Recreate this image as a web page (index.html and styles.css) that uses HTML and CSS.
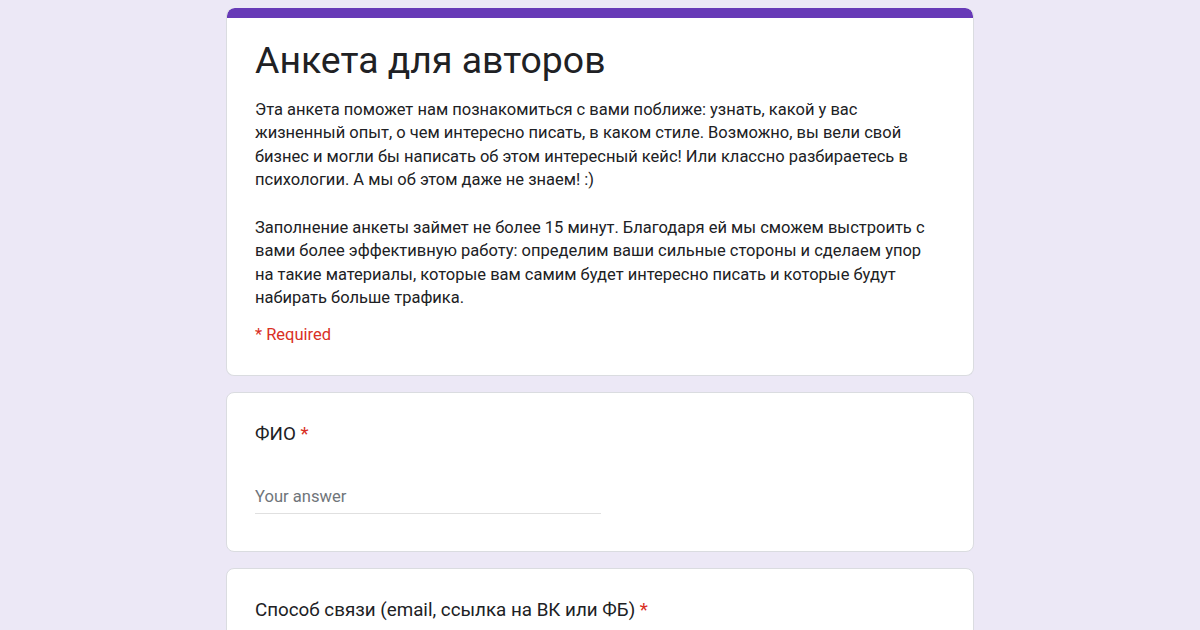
FILE: index.html
```html
<!DOCTYPE html>
<html lang="ru">
<head>
<meta charset="utf-8">
<link rel="stylesheet" href="styles.css">
</head>
<body>
<main class="form">
  <section class="card header-card">
    <div class="accent"></div>
    <div class="card-body">
      <h1 class="title">Анкета для авторов</h1>
      <p class="desc">Эта анкета поможет нам познакомиться с вами поближе: узнать, какой у вас<br>жизненный опыт, о чем интересно писать, в каком стиле. Возможно, вы вели свой<br>бизнес и могли бы написать об этом интересный кейс! Или классно разбираетесь в<br>психологии. А мы об этом даже не знаем! :)</p>
      <p class="desc">Заполнение анкеты займет не более 15 минут. Благодаря ей мы сможем выстроить с<br>вами более эффективную работу: определим ваши сильные стороны и сделаем упор<br>на такие материалы, которые вам самим будет интересно писать и которые будут<br>набирать больше трафика.</p>
      <div class="required">* Required</div>
    </div>
  </section>
  <section class="card question">
    <div class="q-title">ФИО <span class="star">*</span></div>
    <div class="answer">Your answer</div>
  </section>
  <section class="card question">
    <div class="q-title">Способ связи (email, ссылка на ВК или ФБ) <span class="star">*</span></div>
    <div class="answer">Your answer</div>
  </section>
</main>
</body>
</html>
```
FILE: styles.css
```css
html, body {
  margin: 0;
  padding: 0;
  background: #ece8f6;
  font-family: Roboto, "Liberation Sans", sans-serif;
  color: #202124;
}
.form {
  width: 748px;
  margin: 0 auto;
  padding-top: 8px;
  display: flex;
  flex-direction: column;
  gap: 16px;
}
.card {
  background: #fff;
  border: 1px solid #dadce0;
  border-radius: 8px;
  overflow: hidden;
}
.header-card {
  border-top: none;
}
.accent {
  height: 10px;
  background: #673ab7;
  border-radius: 8px 8px 0 0;
}
.card-body {
  padding: 18px 20px 28px 28px;
}
.title {
  margin: 0;
  font-family: Roboto, "Open Sans", sans-serif;
  font-weight: 400;
  font-size: 37.4px;
  line-height: 48px;
  letter-spacing: 0;
  color: #202124;
}
.desc {
  margin: 14px 0 0;
  font-size: 16.5px;
  line-height: 23.3px;
  color: #202124;
}
.desc + .desc {
  margin-top: 25px;
}
.required {
  margin-top: 14px;
  font-size: 16.5px;
  line-height: 24px;
  color: #d93025;
}
.question {
  padding: 28px 24px 37px 28px;
}
.q-title {
  font-size: 18.8px;
  line-height: 26px;
  color: #202124;
}
.star {
  color: #d93025;
}
.answer {
  margin-top: 39px;
  width: 346px;
  font-size: 16.6px;
  line-height: 22px;
  padding-bottom: 5px;
  color: #70757a;
  border-bottom: 1px solid #e0e0e0;
}
```
